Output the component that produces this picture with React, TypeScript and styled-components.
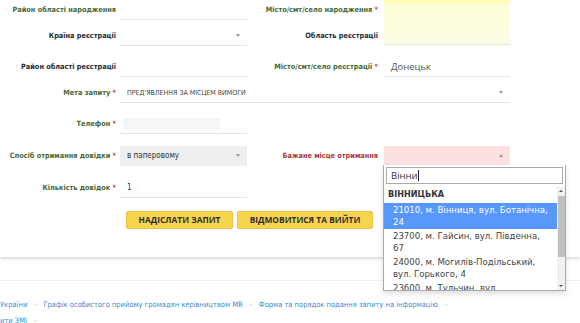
import React from "react";
import styled, { createGlobalStyle } from "styled-components";

const GlobalStyle = createGlobalStyle`
  html, body {
    margin: 0;
    padding: 0;
    background: #ffffff;
    overflow: hidden;
  }
`;

type Tone = "green" | "dark" | "red";

const toneColor: Record<Tone, string> = {
  green: "#46693a",
  dark: "#232b38",
  red: "#a8393a",
};

const App = () => {
  return (
    <>
      <GlobalStyle />
      <StPage>
        <StPanel>
          <StForm>
            <StLabel $tone="green" $col={1} $row={1}>
              Район області народження
            </StLabel>
            <StField $col={2} $row={1} />
            <StLabel $tone="green" $col={3} $row={1}>
              Місто/смт/село народження <StReq>*</StReq>
            </StLabel>
            <StYellowBox />

            <StLabel $tone="dark" $col={1} $row={2}>
              Країна реєстрації
            </StLabel>
            <StField $col={2} $row={2}>
              <StCaret />
            </StField>
            <StLabel $tone="dark" $col={3} $row={2}>
              Область реєстрації
            </StLabel>

            <StLabel $tone="dark" $col={1} $row={3}>
              Район області реєстрації
            </StLabel>
            <StField $col={2} $row={3} />
            <StLabel $tone="green" $col={3} $row={3}>
              Місто/смт/село реєстрації <StReq>*</StReq>
            </StLabel>
            <StField $col={4} $row={3}>
              <StValue>Донецьк</StValue>
            </StField>

            <StLabel $tone="green" $col={1} $row={4}>
              Мета запиту <StReq>*</StReq>
            </StLabel>
            <StWideField>
              <StUpperValue>ПРЕД'ЯВЛЕННЯ ЗА МІСЦЕМ ВИМОГИ</StUpperValue>
              <StCaret />
            </StWideField>

            <StLabel $tone="green" $col={1} $row={5}>
              Телефон <StReq>*</StReq>
            </StLabel>
            <StField $col={2} $row={5}>
              <StBlurred />
            </StField>

            <StLabel $tone="green" $col={1} $row={6}>
              Спосіб отримання довідки <StReq>*</StReq>
            </StLabel>
            <StField $col={2} $row={6} $bg="#eeeeee" $noLine>
              <StSmallValue>в паперовому</StSmallValue>
              <StCaret />
            </StField>
            <StLabel $tone="red" $col={3} $row={6}>
              Бажане місце отримання
            </StLabel>
            <StField $col={4} $row={6} $bg="#fde1e1" $noLine>
              <StCaret $up />
            </StField>

            <StLabel $tone="green" $col={1} $row={7}>
              Кількість довідок <StReq>*</StReq>
            </StLabel>
            <StField $col={2} $row={7}>
              <StSmallValue>1</StSmallValue>
            </StField>

            <StButtons>
              <StButton $w={107}>НАДІСЛАТИ ЗАПИТ</StButton>
              <StButton $w={136}>ВІДМОВИТИСЯ ТА ВИЙТИ</StButton>
            </StButtons>
          </StForm>
        </StPanel>

        <StFooter>
          <StFooterLine>
            <StLink>України</StLink>
            <StDot>·</StDot>
            <StLink>Графік особистого прийому громадян керівництвом МВ</StLink>
            <StDot>·</StDot>
            <StLink>Форма та порядок подання запиту на інформацію</StLink>
            <StDot>·</StDot>
          </StFooterLine>
          <StFooterLine>
            <StLink>ити ЗМІ</StLink>
            <StDot>·</StDot>
          </StFooterLine>
        </StFooter>

        <StDropdown>
          <StSearch>
            Вінни<StCursor />
          </StSearch>
          <StResults>
            <StList>
              <StGroup>ВІННИЦЬКА</StGroup>
              <StOption $active>21010, м. Вінниця, вул. Ботанічна, 24</StOption>
              <StOption>23700, м. Гайсин, вул. Південна, 67</StOption>
              <StOption>24000, м. Могилів-Подільський, вул. Горького, 4</StOption>
              <StOption>23600, м. Тульчин, вул. Леонтовича, 9</StOption>
            </StList>
            <StScrollbar>
              <StArrow />
              <StThumb />
              <StArrow $down />
            </StScrollbar>
          </StResults>
        </StDropdown>
      </StPage>
    </>
  );
};

export default App;

const StPage = styled.div`
  position: relative;
  width: 580px;
  height: 323px;
  overflow: hidden;
  background: #ffffff;
  font-family: "DejaVu Sans Condensed", "DejaVu Sans", sans-serif;
`;

const StPanel = styled.div`
  height: 257px;
  background: #ffffff;
  box-shadow: 0 1px 4px rgba(0, 0, 0, 0.22);
  position: relative;
  z-index: 1;
`;

const StForm = styled.div`
  display: grid;
  grid-template-columns: 120px 127px 137px 126px;
  grid-template-rows: 26px 31px 26px 31px 32px 32px 30px 21px;
`;

const StLabel = styled.div<{ $tone: Tone; $col: number; $row: number }>`
  grid-column: ${({ $col }) => $col};
  grid-row: ${({ $row }) => $row};
  align-self: start;
  height: 20px;
  line-height: 20px;
  text-align: right;
  padding-right: ${({ $col }) => ($col === 1 ? "4px" : "6px")};
  font-size: 7.3px;
  font-weight: 700;
  white-space: nowrap;
  color: ${({ $tone }) => toneColor[$tone]};
`;

const StReq = styled.span`
  color: #e23c3c;
`;

const StField = styled.div<{
  $col: number;
  $row: number;
  $bg?: string;
  $noLine?: boolean;
}>`
  grid-column: ${({ $col }) => $col};
  grid-row: ${({ $row }) => $row};
  align-self: start;
  position: relative;
  height: 19px;
  display: flex;
  align-items: center;
  padding: 0 7px;
  background: ${({ $bg }) => $bg || "transparent"};
  border-bottom: 1px solid ${({ $noLine }) => ($noLine ? "transparent" : "#e4e4e4")};
`;

const StWideField = styled.div`
  grid-column: 2 / 5;
  grid-row: 4;
  align-self: start;
  height: 19px;
  display: flex;
  align-items: center;
  padding: 0 7px;
  border-bottom: 1px solid #e4e4e4;
`;

const StYellowBox = styled.div`
  grid-column: 4;
  grid-row: 1 / 3;
  align-self: start;
  height: 44px;
  background: linear-gradient(180deg, #ffffa4 0, #fdfdd4 4px, #fbfce6 100%);
  border-bottom: 1px solid #e6e6c8;
`;

const StValue = styled.span`
  font-family: "Open Sans", sans-serif;
  font-size: 9.5px;
  color: #555555;
`;

const StSmallValue = styled.span`
  font-size: 8px;
  color: #333333;
`;

const StUpperValue = styled.span`
  font-size: 7px;
  color: #444444;
`;

const StBlurred = styled.div`
  width: 97px;
  height: 12px;
  margin-left: -4px;
  background: #f6f6f6;
`;

const StCaret = styled.span<{ $up?: boolean }>`
  margin-left: auto;
  width: 0;
  height: 0;
  border-left: 2.5px solid transparent;
  border-right: 2.5px solid transparent;
  ${({ $up }) =>
    $up ? "border-bottom: 3px solid #999;" : "border-top: 3px solid #999;"}
`;

const StButtons = styled.div`
  grid-column: 2 / 5;
  grid-row: 8;
  display: flex;
  gap: 4px;
  padding: 3px 0 0 6px;
`;

const StButton = styled.button<{ $w: number }>`
  width: ${({ $w }) => $w}px;
  height: 18px;
  padding: 0;
  background: #f7d44d;
  border: 1px solid #e7c44a;
  border-radius: 2px;
  font-family: "Open Sans", sans-serif;
  font-weight: 700;
  font-size: 8.4px;
  color: #2f2f2f;
  line-height: 16px;
  text-align: center;
  cursor: pointer;
`;

const StFooter = styled.div`
  margin-top: 23px;
  border-top: 1px solid #efefef;
  padding-top: 15px;
  font-family: "DejaVu Sans Condensed", "DejaVu Sans", sans-serif;
  font-size: 7.5px;
`;

const StFooterLine = styled.div`
  display: flex;
  align-items: center;
  height: 16px;
`;

const StLink = styled.span`
  color: #3b8dd3;
  white-space: nowrap;
`;

const StDot = styled.span`
  color: #9a9a9a;
  margin: 0 7px;
`;

const StDropdown = styled.div`
  position: absolute;
  left: 383px;
  top: 165px;
  width: 181px;
  height: 125px;
  z-index: 5;
  background: #ffffff;
  border: 1px solid #aaaaaa;
  border-top: none;
  box-shadow: 0 3px 5px rgba(0, 0, 0, 0.12);
  display: flex;
  flex-direction: column;
  font-family: "DejaVu Sans Condensed", "DejaVu Sans", sans-serif;
`;

const StSearch = styled.div`
  margin: 2px 2px 0 2px;
  height: 15px;
  border: 1px solid #aaaaaa;
  padding: 0 4px;
  display: flex;
  align-items: center;
  font-family: "Open Sans", sans-serif;
  font-size: 9.5px;
  color: #333;
`;

const StCursor = styled.span`
  width: 1px;
  height: 11px;
  background: #222;
`;

const StResults = styled.div`
  flex: 1;
  display: flex;
  overflow: hidden;
  margin-top: 3px;
`;

const StList = styled.div`
  flex: 1;
  overflow: hidden;
`;

const StGroup = styled.div`
  padding: 1px 4px 3px;
  font-weight: 700;
  font-size: 9px;
  line-height: 12px;
  color: #333;
`;

const StOption = styled.div<{ $active?: boolean }>`
  padding: 1px 8px 1px 9px;
  font-size: 9.5px;
  line-height: 12px;
  color: ${({ $active }) => ($active ? "#ffffff" : "#444444")};
  background: ${({ $active }) => ($active ? "#5897fb" : "transparent")};
`;

const StScrollbar = styled.div`
  width: 8px;
  background: #f1f1f1;
  display: flex;
  flex-direction: column;
  align-items: center;
  padding: 3px 0;
  gap: 4px;
`;

const StArrow = styled.span<{ $down?: boolean }>`
  width: 0;
  height: 0;
  border-left: 2px solid transparent;
  border-right: 2px solid transparent;
  ${({ $down }) =>
    $down
      ? "border-top: 2px solid #555; margin-top: auto;"
      : "border-bottom: 2px solid #555;"}
`;

const StThumb = styled.div`
  width: 7px;
  height: 61px;
  background: #c1c1c1;
`;
